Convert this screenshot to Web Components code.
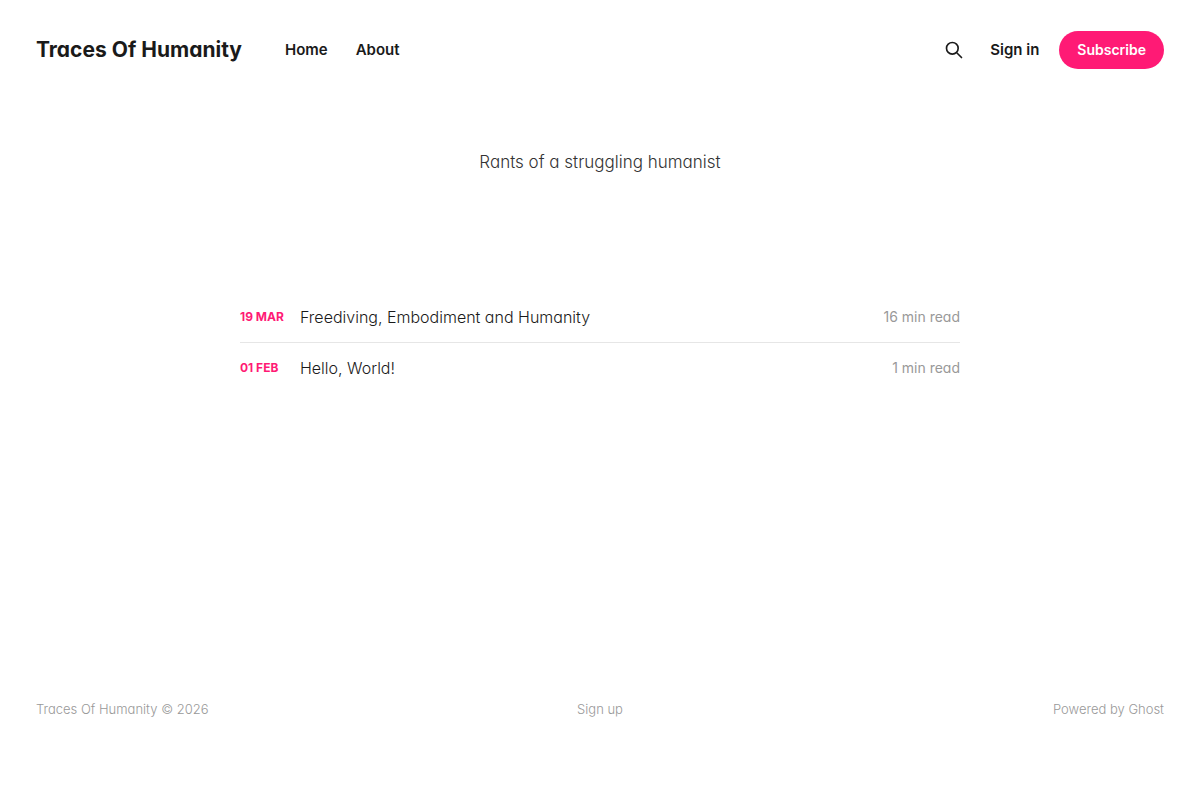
<!DOCTYPE html>
<html lang="en">
<head>
    <meta charset="UTF-8">
    <meta name="viewport" content="width=device-width, initial-scale=1">
    <title>Traces Of Humanity</title>
    <style>
        body {
            --accent: #ff1a75;
            --text-color: #1a1a1a;
            --muted-color: #999;
            --line-color: #e6e6e6;
            --gutter: 36px;
            margin: 0;
            background: #fff;
            color: var(--text-color);
            font-family: Inter, "Open Sans", sans-serif;
            font-feature-settings: "cv11";
            font-size: 16px;
            line-height: 24px;
        }
    </style>
</head>
<body>
    <site-page>
        <site-header slot="header" name="Traces Of Humanity">
            <nav-link href="#home">Home</nav-link>
            <nav-link href="#about">About</nav-link>
            <search-button slot="actions"></search-button>
            <nav-link slot="actions" href="#signin">Sign in</nav-link>
            <subscribe-link slot="actions" href="#signup">Subscribe</subscribe-link>
        </site-header>
        <site-tagline>Rants of a struggling humanist</site-tagline>
        <post-feed>
            <post-item date="2023-03-19" label="19 Mar" length="16 min read" href="#freediving">Freediving, Embodiment and Humanity</post-item>
            <post-item date="2023-02-01" label="01 Feb" length="1 min read" href="#hello">Hello, World!</post-item>
        </post-feed>
        <site-footer slot="footer">
            <span slot="copyright">Traces Of Humanity © 2026</span>
        </site-footer>
    </site-page>

    <script>
        class SitePage extends HTMLElement {
            constructor() {
                super();
                this.attachShadow({ mode: "open" });

                this.shadowRoot.innerHTML = `
                <style>
                    :host {
                        display: flex;
                        flex-direction: column;
                        min-height: 100vh;
                    }

                    main {
                        flex: 1;
                    }
                </style>
                <slot name="header"></slot>
                <main><slot></slot></main>
                <slot name="footer"></slot>
                `;
            }
        }

        class SiteHeader extends HTMLElement {
            constructor() {
                super();
                this.attachShadow({ mode: "open" });

                this.shadowRoot.innerHTML = `
                <style>
                    :host {
                        display: block;
                    }

                    header {
                        display: flex;
                        align-items: center;
                        height: 100px;
                        padding: 0 var(--gutter);
                    }

                    .logo {
                        margin-right: 43px;
                        color: var(--text-color);
                        font-size: 21px;
                        font-weight: 700;
                        text-decoration: none;
                        white-space: nowrap;
                    }

                    nav {
                        display: flex;
                        gap: 28px;
                    }

                    .actions {
                        display: flex;
                        align-items: center;
                        gap: 20px;
                        margin-left: auto;
                    }
                </style>
                <header>
                    <a class="logo" href="#home"></a>
                    <nav><slot></slot></nav>
                    <div class="actions"><slot name="actions"></slot></div>
                </header>
                `;
            }

            connectedCallback() {
                this.shadowRoot.querySelector(".logo").textContent = this.getAttribute("name");
            }
        }

        class NavLink extends HTMLElement {
            constructor() {
                super();
                this.attachShadow({ mode: "open" });

                this.shadowRoot.innerHTML = `
                <style>
                    :host {
                        display: block;
                    }

                    a {
                        display: block;
                        color: var(--text-color);
                        font-size: 15px;
                        font-weight: 600;
                        text-decoration: none;
                        white-space: nowrap;
                    }

                    a:hover {
                        opacity: 0.8;
                    }
                </style>
                <a href=""><slot></slot></a>
                `;
            }

            connectedCallback() {
                this.shadowRoot.querySelector("a").href = this.getAttribute("href");
            }
        }

        class SearchButton extends HTMLElement {
            constructor() {
                super();
                this.attachShadow({ mode: "open" });

                this.shadowRoot.innerHTML = `
                <style>
                    :host {
                        display: block;
                    }

                    button {
                        display: flex;
                        align-items: center;
                        justify-content: center;
                        width: 32px;
                        height: 32px;
                        padding: 0;
                        border: 0;
                        background: transparent;
                        color: var(--text-color);
                        cursor: pointer;
                    }
                </style>
                <button type="button" aria-label="Search">
                    <svg width="20" height="20" viewBox="0 0 24 24" fill="none" stroke="currentColor" stroke-width="2" stroke-linecap="round" stroke-linejoin="round" aria-hidden="true">
                        <path d="M21 21l-6-6m2-5a7 7 0 11-14 0 7 7 0 0114 0z"></path>
                    </svg>
                </button>
                `;
            }
        }

        class SubscribeLink extends HTMLElement {
            constructor() {
                super();
                this.attachShadow({ mode: "open" });

                this.shadowRoot.innerHTML = `
                <style>
                    :host {
                        display: block;
                    }

                    a {
                        display: block;
                        padding: 7px 18px;
                        border-radius: 19px;
                        background: var(--accent);
                        color: #fff;
                        font-size: 14px;
                        font-weight: 600;
                        text-decoration: none;
                    }
                </style>
                <a href=""><slot></slot></a>
                `;
            }

            connectedCallback() {
                this.shadowRoot.querySelector("a").href = this.getAttribute("href");
            }
        }

        class SiteTagline extends HTMLElement {
            constructor() {
                super();
                this.attachShadow({ mode: "open" });

                this.shadowRoot.innerHTML = `
                <style>
                    :host {
                        display: block;
                        padding: 48px var(--gutter) 116px;
                        color: #333;
                        font-size: 17px;
                        font-weight: 300;
                        line-height: 28px;
                        text-align: center;
                    }

                    p {
                        margin: 0;
                    }
                </style>
                <p><slot></slot></p>
                `;
            }
        }

        class PostFeed extends HTMLElement {
            constructor() {
                super();
                this.attachShadow({ mode: "open" });

                this.shadowRoot.innerHTML = `
                <style>
                    :host {
                        display: block;
                        max-width: 720px;
                        margin: 0 auto;
                    }

                    ::slotted(post-item:not(:first-child)) {
                        border-top: 1px solid var(--line-color);
                    }
                </style>
                <slot></slot>
                `;
            }
        }

        class PostItem extends HTMLElement {
            constructor() {
                super();
                this.attachShadow({ mode: "open" });

                this.shadowRoot.innerHTML = `
                <style>
                    :host {
                        display: block;
                    }

                    a {
                        display: flex;
                        align-items: center;
                        padding: 13px 0;
                        color: var(--text-color);
                        text-decoration: none;
                    }

                    time {
                        flex: 0 0 60px;
                        color: var(--accent);
                        font-size: 12px;
                        font-weight: 700;
                        text-transform: uppercase;
                    }

                    h2 {
                        flex: 1;
                        margin: 0;
                        font-size: 16px;
                        font-weight: 300;
                    }

                    .length {
                        color: var(--muted-color);
                        font-size: 14px;
                    }
                </style>
                <article>
                    <a href="">
                        <time></time>
                        <h2><slot></slot></h2>
                        <span class="length"></span>
                    </a>
                </article>
                `;
            }

            connectedCallback() {
                const time = this.shadowRoot.querySelector("time");
                time.dateTime = this.getAttribute("date");
                time.textContent = this.getAttribute("label");
                this.shadowRoot.querySelector("a").href = this.getAttribute("href");
                this.shadowRoot.querySelector(".length").textContent = this.getAttribute("length");
            }
        }

        class SiteFooter extends HTMLElement {
            constructor() {
                super();
                this.attachShadow({ mode: "open" });

                this.shadowRoot.innerHTML = `
                <style>
                    :host {
                        display: block;
                    }

                    footer {
                        display: grid;
                        grid-template-columns: 1fr auto 1fr;
                        padding: 48px var(--gutter) 80px;
                        color: var(--muted-color);
                        font-size: 13px;
                        font-weight: 300;
                        line-height: 22px;
                    }

                    a {
                        color: inherit;
                        text-decoration: none;
                    }

                    .powered {
                        text-align: right;
                    }
                </style>
                <footer>
                    <div><slot name="copyright"></slot></div>
                    <nav><a href="#signup">Sign up</a></nav>
                    <div class="powered"><a href="#ghost">Powered by Ghost</a></div>
                </footer>
                `;
            }
        }

        customElements.define("site-page", SitePage);
        customElements.define("site-header", SiteHeader);
        customElements.define("nav-link", NavLink);
        customElements.define("search-button", SearchButton);
        customElements.define("subscribe-link", SubscribeLink);
        customElements.define("site-tagline", SiteTagline);
        customElements.define("post-feed", PostFeed);
        customElements.define("post-item", PostItem);
        customElements.define("site-footer", SiteFooter);
    </script>
</body>
</html>
